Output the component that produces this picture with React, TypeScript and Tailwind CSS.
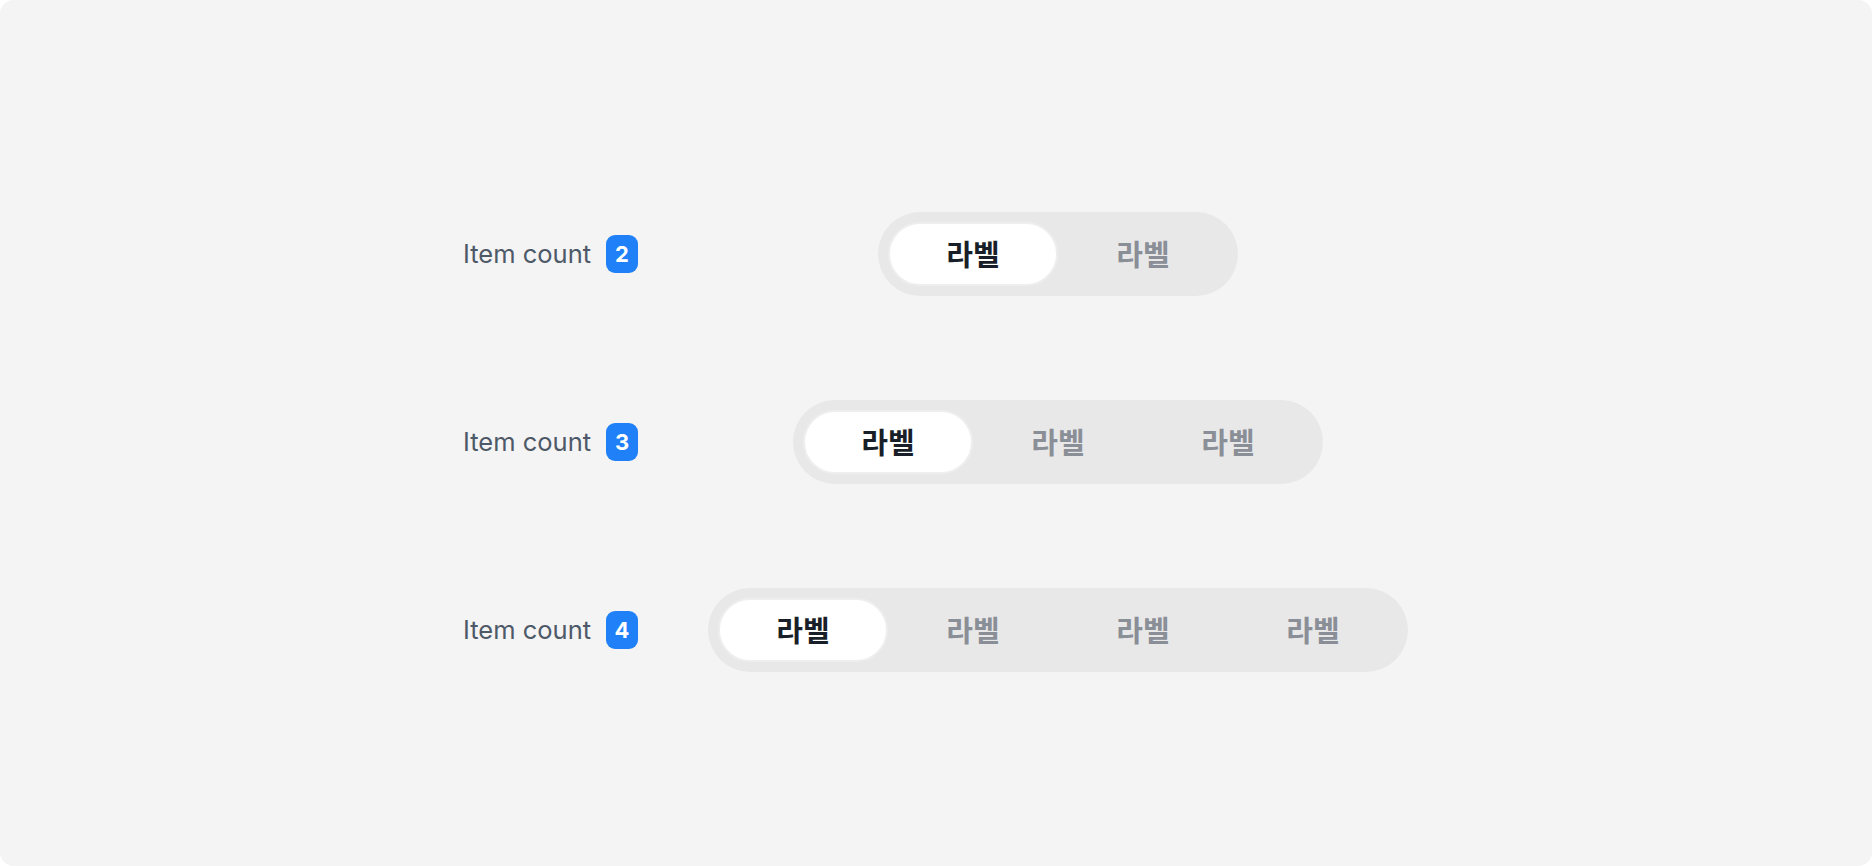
const rows = [2, 3, 4]

function Segmented({ count }: { count: number }) {
  const items = Array.from({ length: count }, (_, i) => i)
  return (
    <div className="flex items-center rounded-full bg-[#e8e8e8] p-[10px]">
      {items.map((i) => (
        <div
          key={i}
          className={
            i === 0
              ? 'flex h-[64px] w-[170px] items-center justify-center rounded-full border-2 border-[#eeeeee] bg-white text-[29px] font-bold text-[#191f28]'
              : 'flex h-[64px] w-[170px] items-center justify-center rounded-full text-[29px] font-bold text-[#8a8e96]'
          }
          style={{ fontFamily: '"Noto Sans CJK KR", sans-serif' }}
        >
          라벨
        </div>
      ))}
    </div>
  )
}

export default function App() {
  return (
    <div className="h-[866px] w-[1872px] bg-white">
      <div className="flex h-full w-full flex-col items-center gap-[104px] rounded-[14px] bg-[#f4f4f4] pt-[212px]">
        {rows.map((n) => (
          <div key={n} className="flex h-[84px] w-[946px] items-center">
            <div className="flex w-[244px] items-center gap-[15px]">
              <span className="text-[25.5px] text-[#4e5968]" style={{ fontFamily: 'Inter, sans-serif' }}>
                Item count
              </span>
              <span
                className="flex h-[38px] w-[32px] items-center justify-center rounded-[9px] bg-[#2080f7] text-[22px] font-bold text-white"
                style={{ fontFamily: 'Inter, sans-serif' }}
              >
                {n}
              </span>
            </div>
            <div className="flex flex-1 justify-center">
              <Segmented count={n} />
            </div>
          </div>
        ))}
      </div>
    </div>
  )
}
